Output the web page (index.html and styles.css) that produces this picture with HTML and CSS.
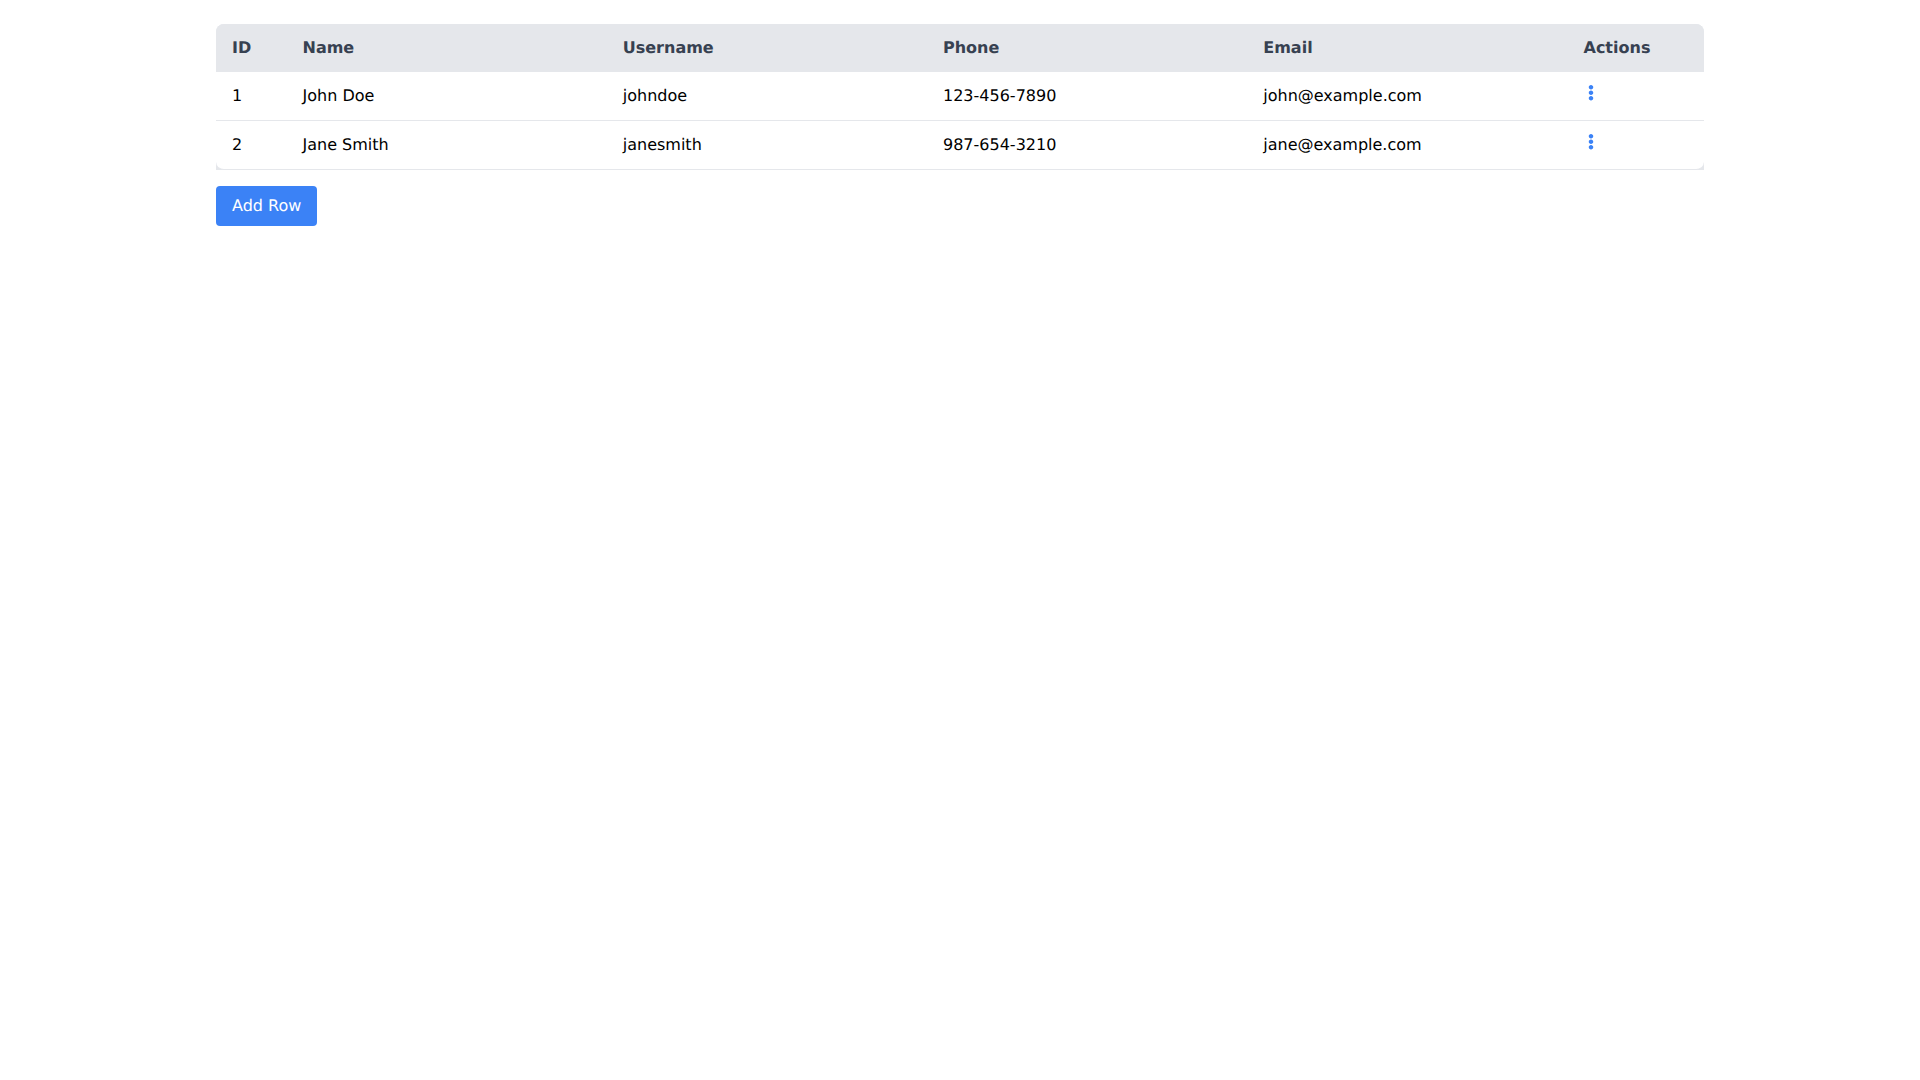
FILE: index.html
```html
<!DOCTYPE html>
<html lang="en">
<head>
<meta charset="utf-8">
<title>Users</title>
<link rel="stylesheet" href="styles.css">
</head>
<body>
<main class="container">
  <div class="table-wrap">
    <table class="data-table">
      <colgroup>
        <col class="col-id"><col><col><col><col><col class="col-actions">
      </colgroup>
      <thead>
        <tr><th>ID</th><th>Name</th><th>Username</th><th>Phone</th><th>Email</th><th>Actions</th></tr>
      </thead>
      <tbody>
        <tr>
          <td>1</td><td>John Doe</td><td>johndoe</td><td>123-456-7890</td><td>john@example.com</td>
          <td class="cell-actions"><button class="icon-btn" aria-label="Actions"><svg class="icon" viewBox="0 8 192 512"><path d="M96 184c39.8 0 72 32.2 72 72s-32.2 72-72 72-72-32.2-72-72 32.2-72 72-72zM24 80c0 39.8 32.2 72 72 72s72-32.2 72-72S135.8 8 96 8 24 40.2 24 80zm0 352c0 39.8 32.2 72 72 72s72-32.2 72-72-32.2-72-72-72-72 32.2-72 72z"/></svg></button></td>
        </tr>
        <tr>
          <td>2</td><td>Jane Smith</td><td>janesmith</td><td>987-654-3210</td><td>jane@example.com</td>
          <td class="cell-actions"><button class="icon-btn" aria-label="Actions"><svg class="icon" viewBox="0 8 192 512"><path d="M96 184c39.8 0 72 32.2 72 72s-32.2 72-72 72-72-32.2-72-72 32.2-72 72-72zM24 80c0 39.8 32.2 72 72 72s72-32.2 72-72S135.8 8 96 8 24 40.2 24 80zm0 352c0 39.8 32.2 72 72 72s72-32.2 72-72-32.2-72-72-72-72 32.2-72 72z"/></svg></button></td>
        </tr>
      </tbody>
    </table>
  </div>
  <button class="add-btn">Add Row</button>
</main>
</body>
</html>
```
FILE: styles.css
```css
* { box-sizing: border-box; }
html, body { margin: 0; background: #fff; }
body {
  font-family: "DejaVu Sans", sans-serif;
  font-size: 16px;
  line-height: 24px;
  color: #000;
  text-rendering: geometricPrecision;
}
.container {
  max-width: 1536px;
  margin: 0 auto;
  padding: 24px;
}
.table-wrap {
  border-radius: 8px 8px 0 0;
  overflow: hidden;
  background: #e5e7eb;
}
.data-table {
  width: 100%;
  table-layout: fixed;
  border-collapse: separate;
  border-spacing: 0;
}
.col-id { width: 70.5px; }
.col-actions { width: 136.5px; }
.data-table th {
  padding: 12px 16px;
  background: #e5e7eb;
  color: #374151;
  font-weight: 700;
  text-align: left;
}
.data-table td {
  padding: 12px 16px;
  background: #fff;
  border-bottom: 1px solid #e5e7eb;
  text-align: left;
}
.data-table tr:last-child td:first-child { border-bottom-left-radius: 8px; }
.data-table tr:last-child td:last-child { border-bottom-right-radius: 8px; }
.data-table .cell-actions { vertical-align: top; }
.icon-btn {
  display: block;
  width: 15px;
  height: 17px;
  padding: 1px 0 0;
  border: 0;
  background: none;
  color: #3b82f6;
}
.icon {
  display: block;
  width: 6px;
  height: 16px;
  margin: 0 auto;
  fill: currentColor;
}
.add-btn {
  display: block;
  margin-top: 16px;
  padding: 8px 16px;
  border: 0;
  border-radius: 4px;
  background: #3b82f6;
  color: #fff;
  font: inherit;
  text-rendering: inherit;
}
```
